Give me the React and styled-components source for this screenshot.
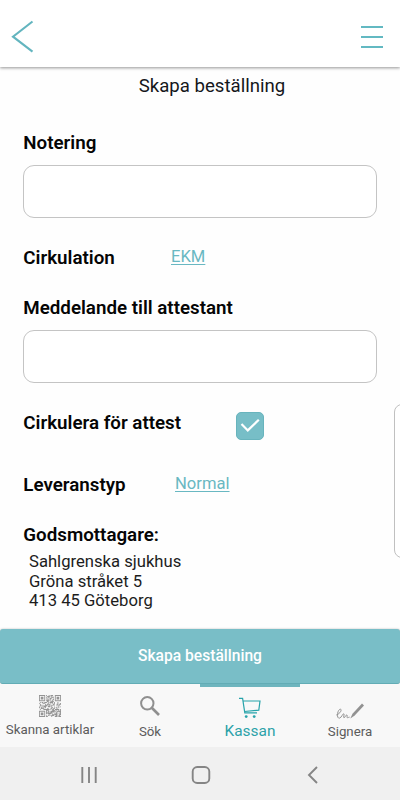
import React from "react";
import styled, { createGlobalStyle } from "styled-components";

const Global = createGlobalStyle`
  * { box-sizing: border-box; }
  body { margin: 0; background: #fefefe; font-family: Roboto, "Liberation Sans", sans-serif; }
`;

const Screen = styled.div`
  position: relative;
  display: flex;
  flex-direction: column;
  width: 400px;
  height: 800px;
  overflow: hidden;
  background: #fefefe;
`;

const Header = styled.header`
  display: flex;
  justify-content: space-between;
  align-items: flex-start;
  height: 67px;
  flex: none;
  padding: 20px 16px 0 11px;
  background: #fff;
  box-shadow: 0 1px 3px rgba(0, 0, 0, 0.42);
`;

const IconButton = styled.button`
  display: block;
  padding: 0;
  border: 0;
  background: none;
  line-height: 0;
`;

const Main = styled.main`
  flex: 1;
  min-height: 0;
  padding: 8px 23px 0;
`;

const Title = styled.h1`
  margin: 0;
  height: 22px;
  padding-left: 24px;
  font-size: 18.6px;
  font-weight: 400;
  line-height: 22px;
  text-align: center;
  color: #15171b;
`;

const Field = styled.section`
  display: flex;
  align-items: flex-start;
  height: 22px;
  margin-top: ${(p) => p.$gap}px;
`;

const Label = styled.h2`
  flex: none;
  width: ${(p) => (p.$width ? `${p.$width}px` : "auto")};
  margin: 0;
  padding-left: 0.3px;
  font-size: 18.75px;
  font-weight: 600;
  line-height: 22px;
  white-space: nowrap;
  color: #050505;
`;

const Link = styled.a`
  font-size: 16.6px;
  line-height: ${(p) => p.$line || 22}px;
  color: #69b8c2;
  text-decoration: underline;
  text-decoration-thickness: 1px;
  text-underline-offset: 2px;
`;

const Input = styled.input`
  display: block;
  width: 354px;
  height: 53px;
  margin: 11px 0 0;
  border: 1px solid #c4c4c4;
  border-radius: 11px;
  background: #fff;
  outline: none;
`;

const Check = styled.span`
  display: block;
  width: 28px;
  height: 28px;
  border: 1px solid #68b4bd;
  border-radius: 5px;
  background: #77bec7;
  line-height: 0;
`;

const Address = styled.address`
  margin: 6px 0 0 6px;
  font-size: 16.65px;
  font-style: normal;
  line-height: 19.6px;
  color: #1c1c1c;
`;

const Submit = styled.button`
  flex: none;
  height: 55px;
  padding: 0;
  border: 0;
  border-bottom: 1px solid #62acb5;
  border-radius: 3px;
  background: #79bec7;
  box-shadow: 0 0 2px rgba(0, 0, 0, 0.3);
  font: 500 15.6px/20px Roboto, "Liberation Sans", sans-serif;
  color: #fff;
`;

const Tabs = styled.nav`
  display: grid;
  grid-template-columns: repeat(4, 1fr);
  flex: none;
  height: 63px;
  background: #f8f8f8;
`;

const Tab = styled.a`
  display: flex;
  flex-direction: column;
  align-items: center;
  justify-content: flex-end;
  gap: ${(p) => p.$gap}px;
  padding-bottom: ${(p) => p.$bottom}px;
  border-top: 3px solid ${(p) => (p.$active ? "#6eb5be" : "transparent")};
  font-size: ${(p) => (p.$active ? 15.4 : 13.3)}px;
  line-height: 16px;
  white-space: nowrap;
  color: ${(p) => (p.$active ? "#2da2a9" : "#5c5c5c")};
`;

const SystemBar = styled.footer`
  display: grid;
  grid-template-columns: 112px 112px 12px;
  align-items: center;
  flex: none;
  height: 53px;
  padding: 2px 0 0 79px;
  background: #f0f0f0;
`;

const EdgePanel = styled.aside`
  position: absolute;
  top: 404px;
  right: -10px;
  width: 16px;
  height: 154px;
  border: 1px solid #c0c0c0;
  border-radius: 8px;
  background: #fff;
`;

const Svg = styled.svg`
  display: block;
  flex: none;
  fill: none;
`;

const QR_SIZE = 25;

function inFinder(x, y) {
  const corners = [[0, 0], [QR_SIZE - 7, 0], [0, QR_SIZE - 7]];
  for (const [cx, cy] of corners) {
    const dx = x - cx;
    const dy = y - cy;
    if (dx >= -1 && dx <= 7 && dy >= -1 && dy <= 7) {
      const r = Math.max(Math.abs(dx - 3), Math.abs(dy - 3));
      return r === 3 || r <= 1;
    }
  }
  return null;
}

function qrPath() {
  let seed = 91;
  let d = "";
  for (let y = 0; y < QR_SIZE; y++) {
    for (let x = 0; x < QR_SIZE; x++) {
      seed = (seed * 1103515245 + 12345) % 2147483648;
      const finder = inFinder(x, y);
      const on = finder === null ? seed / 2147483648 > 0.48 : finder;
      if (on) d += `M${x} ${y}h1v1h-1z`;
    }
  }
  return d;
}

const QR_PATH = qrPath();

const BackIcon = () => (
  <Svg width="24" height="34" viewBox="0 0 24 34" stroke="#63b5bf" strokeWidth="2.1">
    <path d="M21.5 1.5 2 16.7l19.500 15" />
  </Svg>
);
const MenuIcon = () => (
  <Svg width="23" height="30" viewBox="0 0 23 30">
    <path fill="#63b9c2" d="M0 6h22v2H0zM0 16h22v2H0zM0 26h22v2H0z" />
  </Svg>
);
const CheckIcon = () => (
  <Svg width="26" height="26" viewBox="0 0 26 26" stroke="#fff" strokeWidth="2.200">
    <path d="m4.500 11 6.300 6.400L21.800 6.700" />
  </Svg>
);
const QrIcon = () => (
  <Svg width="22" height="22" viewBox="0 0 25 25">
    <path d={QR_PATH} fill="#949494" />
  </Svg>
);
const SearchIcon = () => (
  <Svg width="20" height="20" viewBox="0 0 20 20" stroke="#8f8f8f">
    <circle cx="7.300" cy="7.300" r="6.200" strokeWidth="2" />
    <path d="m12 12 7 7" strokeWidth="2.600" />
  </Svg>
);
const CartIcon = () => (
  <Svg width="22" height="22" viewBox="0 0 22 22" stroke="#27a3aa" strokeWidth="1.200">
    <path d="M0 1.300h3.600l2.200 14.500H18M4.200 4H21l-1.200 9.200-14.300 1.300" />
    <circle cx="7.200" cy="19.600" r="1.400" fill="#27a3aa" stroke="none" />
    <circle cx="15.200" cy="19.600" r="1.400" fill="#27a3aa" stroke="none" />
  </Svg>
);
const SignIcon = () => (
  <Svg width="28" height="17" viewBox="0 0 28 17" stroke="#929292">
    <path d="M.3 12C3 11 5.500 8.500 5 6.700 4.300 5 2 7.500 1.600 10.500c-.5 3.500.5 5 2 4.600 2-.5 3-4.600 4.200-4.300 1 .3-.8 3.500.1 3.900 1 .3 2-3 2.900-2.800.9.2-.3 2.700.6 2.900.8.1 1.300-.8 2.200-.7" strokeWidth="1" />
    <path d="m14.300 15.500 2.200-4.800L26 .6l2 2-9.600 10.200z" fill="#929292" stroke="none" />
  </Svg>
);
const RecentsIcon = () => (
  <Svg width="20" height="18" viewBox="0 0 20 18" stroke="#858585" strokeWidth="1.900">
    <path d="M3.300 1v16M10 1v16M16.700 1v16" />
  </Svg>
);
const HomeIcon = () => (
  <Svg width="20" height="18" viewBox="0 0 20 18" stroke="#858585" strokeWidth="1.900">
    <rect x="1.700" y="1" width="16.600" height="16" rx="4.500" />
  </Svg>
);
const SystemBackIcon = () => (
  <Svg width="16" height="18" viewBox="0 0 16 18" stroke="#858585" strokeWidth="1.900">
    <path d="M14 1 6 9l8 8" />
  </Svg>
);

export default function App() {
  return (
    <>
      <Global />
      <Screen>
        <Header>
          <IconButton aria-label="Tillbaka"><BackIcon /></IconButton>
          <IconButton aria-label="Meny"><MenuIcon /></IconButton>
        </Header>
        <Main>
          <Title>Skapa beställning</Title>
          <Field $gap={35}><Label>Notering</Label></Field>
          <Input aria-label="Notering" />
          <Field $gap={29}>
            <Label $width={148}>Cirkulation</Label>
            <Link $line={20}>EKM</Link>
          </Field>
          <Field $gap={28}><Label>Meddelande till attestant</Label></Field>
          <Input aria-label="Meddelande till attestant" />
          <Field $gap={29}>
            <Label $width={213}>Cirkulera för attest</Label>
            <Check role="checkbox" aria-checked="true"><CheckIcon /></Check>
          </Field>
          <Field $gap={40}>
            <Label $width={152}>Leveranstyp</Label>
            <Link $line={20}>Normal</Link>
          </Field>
          <Field $gap={28}><Label>Godsmottagare:</Label></Field>
          <Address>
            Sahlgrenska sjukhus<br />
            Gröna stråket 5<br />
            413 45 Göteborg
          </Address>
        </Main>
        <Submit>Skapa beställning</Submit>
        <Tabs>
          <Tab $gap={5} $bottom={9}><QrIcon />Skanna artiklar</Tab>
          <Tab $gap={8} $bottom={7}><SearchIcon />Sök</Tab>
          <Tab $active $gap={4} $bottom={8}><CartIcon />Kassan</Tab>
          <Tab $gap={4} $bottom={7}><SignIcon />Signera</Tab>
        </Tabs>
        <SystemBar>
          <RecentsIcon />
          <HomeIcon />
          <SystemBackIcon />
        </SystemBar>
        <EdgePanel />
      </Screen>
    </>
  );
}
